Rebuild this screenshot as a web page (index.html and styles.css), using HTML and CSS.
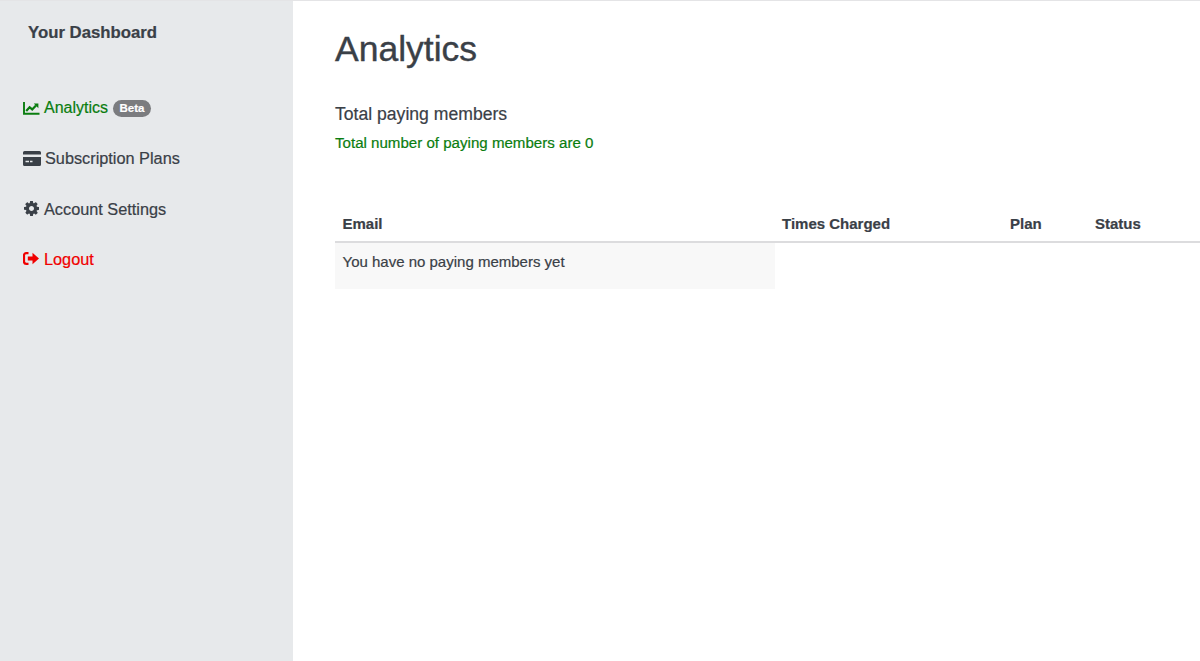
FILE: index.html
```html
<!DOCTYPE html>
<html lang="en">
<head>
<meta charset="utf-8">
<title>Analytics</title>
<link rel="stylesheet" href="styles.css">
</head>
<body>
<div class="layout">
  <aside class="sidebar">
    <div class="brand">Your Dashboard</div>
    <nav class="nav">
      <a class="nav-item green" href="#">
        <svg class="icon" width="17" height="14" viewBox="0 0 17 14"><path d="M1 1v11.800h15.500" fill="none" stroke="currentColor" stroke-width="1.900"/><path d="M3.200 10l3.400-3.800 2.600 2.200 3.800-4" fill="none" stroke="currentColor" stroke-width="2.200"/><path d="M10.800 2.600h4.600v4.600z" fill="currentColor"/></svg>
        <span>Analytics</span><span class="badge">Beta</span>
      </a>
      <a class="nav-item" href="#">
        <svg class="icon" width="18" height="15" viewBox="0 0 18 15"><path d="M1.500 0h15A1.500 1.500 0 0 1 18 1.500V3.500H0V1.500A1.500 1.500 0 0 1 1.500 0zM0 6h18v7.500a1.500 1.500 0 0 1-1.500 1.500h-15A1.500 1.500 0 0 1 0 13.500z" fill="currentColor"/><path d="M2.500 10.500h3.500M7 10.500h2.500" stroke="#e7e9eb" stroke-width="1.400"/></svg>
        <span class="wide">Subscription Plans</span>
      </a>
      <a class="nav-item" href="#">
        <svg class="icon icon-gear" width="15" height="15" viewBox="0 0 1536 1536"><path fill="currentColor" d="M1024 768q0-106-75-181t-181-75-181 75-75 181 75 181 181 75 181-75 75-181zm512-109v222q0 12-8 23t-20 13l-185 28q-19 54-39 91 35 50 107 138 10 12 10 25t-9 23q-27 37-99 108t-94 71q-12 0-26-9l-138-108q-44 23-91 38-16 136-29 186-7 28-36 28H657q-14 0-24.500-8.500T621 1497l-28-184q-49-16-90-37l-141 107q-10 9-25 9-14 0-25-11-126-114-165-168-7-10-7-23 0-12 8-23 15-21 51-66.500t54-70.500q-27-50-41-99L29 905q-13-2-21-12.500T0 869V647q0-12 8-23t19-13l186-28q14-46 39-92-40-57-107-138-10-12-10-24 0-10 9-23 26-36 98.500-107.500T337 127q13 0 26 10l138 107q44-23 91-38 16-136 29-186 7-28 36-28h222q14 0 24.500 8.500T915 14l28 184q49 16 90 37l142-107q9-9 24-9 13 0 25 10 129 119 165 170 7 8 7 22 0 12-8 23-15 21-51 66.500t-54 70.500q26 50 41 98l183 28q13 2 21 12.500t8 23.500z"/></svg>
        <span class="wide">Account Settings</span>
      </a>
      <a class="nav-item red" href="#">
        <svg class="icon icon-logout" width="16" height="13" viewBox="0 0 16 13"><path d="M5.500 1.200H3.200A2.200 2.200 0 0 0 1 3.400v6.200a2.200 2.200 0 0 0 2.200 2.200h2.300" fill="none" stroke="currentColor" stroke-width="2.200"/><path d="M4.800 4.400h4.700V.8l6.500 5.700-6.500 5.700V8.600H4.800z" fill="currentColor"/></svg>
        <span class="wide">Logout</span>
      </a>
    </nav>
  </aside>
  <main class="main">
    <h1 class="title">Analytics</h1>
    <h2 class="subtitle">Total paying members</h2>
    <p class="count">Total number of paying members are 0</p>
    <table class="members">
      <thead>
        <tr><th class="col-email">Email</th><th class="col-times">Times Charged</th><th class="col-plan">Plan</th><th class="col-status">Status</th></tr>
      </thead>
      <tbody>
        <tr><td class="empty">You have no paying members yet</td><td></td><td></td><td></td></tr>
      </tbody>
    </table>
  </main>
</div>
</body>
</html>
```
FILE: styles.css
```css
* { box-sizing: border-box; }
html, body { margin: 0; height: 100%; overflow: hidden; }
body {
  font-family: "Liberation Sans", Arial, sans-serif;
  font-size: 15px;
  color: #3a4047;
  background: #fff;
  -webkit-text-stroke: 0.2px currentColor;
}
.layout {
  display: flex;
  height: 661px;
  border-top: 1px solid #e4e4e6;
}
.sidebar {
  flex: 0 0 293px;
  background: #e7e9eb;
  padding: 22px 0 0 23px;
}
.brand {
  font-size: 16.750px;
  font-weight: 700;
  line-height: 20px;
  padding-left: 5px;
}
.nav {
  display: flex;
  flex-direction: column;
  gap: 30.300px;
  margin-top: 55px;
}
.nav-item {
  display: flex;
  align-items: center;
  gap: 4px;
  height: 20px;
  color: #3a4047;
  text-decoration: none;
  font-size: 16px;
  line-height: 20px;
}
.wide { font-size: 16.300px; }
.icon { flex: none; }
.icon-gear { margin: 0 1px 0 1px; }
.icon-logout { margin-right: 1px; }
.green { color: #0a7d0f; }
.red { color: #f00000; }
.badge {
  margin-left: 1px;
  background: #7b7c7f;
  color: #fff;
  font-size: 11.500px;
  font-weight: 700;
  line-height: 17px;
  height: 17px;
  padding: 0 6.500px;
  border-radius: 9px;
}
.main {
  flex: 1;
  min-width: 0;
  padding: 0 0 0 42px;
}
.title {
  margin: 28px 0 0;
  font-size: 35.500px;
  font-weight: 500;
  line-height: 41px;
  -webkit-text-stroke-width: 0.4px;
}
.subtitle {
  margin: 33.500px 0 0;
  font-size: 17.600px;
  font-weight: 500;
  line-height: 20px;
}
.count {
  margin: 9.500px 0 0;
  color: #0a7d0f;
  font-size: 15.100px;
  line-height: 20px;
}
.members {
  width: 900px;
  margin-top: 52px;
  border-collapse: collapse;
  table-layout: fixed;
  font-size: 15px;
}
.members th {
  text-align: left;
  font-weight: 700;
  padding: 2px 7.500px 0;
  height: 37px;
  line-height: 20px;
  border-bottom: 2px solid #dcdcde;
}
.col-email { width: 439.500px; }
.col-times { width: 228px; }
.col-plan { width: 85px; }
.members td {
  padding: 9px 7.500px 0;
  height: 47px;
  line-height: 20px;
  vertical-align: top;
}
.members td.empty { background: #f8f8f8; }
```
